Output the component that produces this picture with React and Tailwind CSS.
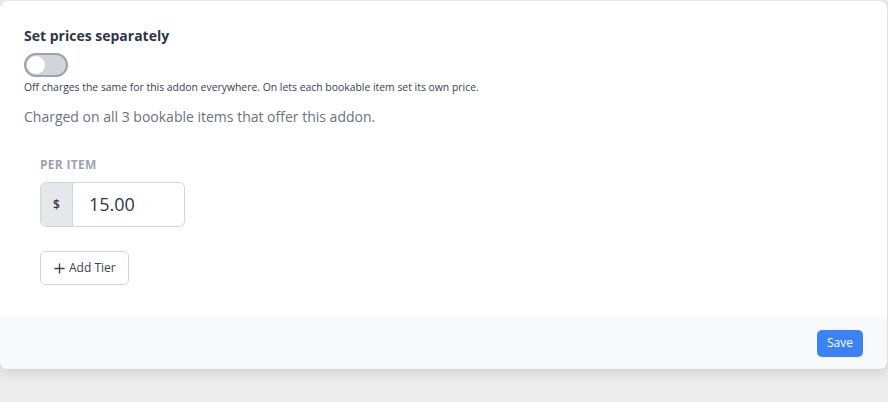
export default function App() {
  return (
    <div className="w-[888px] h-[402px] bg-[#ececec] overflow-hidden" style={{ fontFamily: '"Open Sans", sans-serif' }}>
      <div className="w-[887px] h-[369px] bg-white rounded-lg shadow-[0_4px_12px_rgba(0,0,0,0.12)] border-t border-[#e5e7eb] flex flex-col overflow-hidden">
        <div className="flex-1 px-6 pt-[25px]">
          <div className="text-[14px] font-bold text-[#2d3748] leading-[20px]">Set prices separately</div>
          <div className="mt-[7px] w-[44px] h-[24px] rounded-full bg-[#d1d5db] border-2 border-[#9ca3af] flex items-center p-[1px]">
            <div className="w-[18px] h-[18px] rounded-full bg-white"></div>
          </div>
          <div className="mt-[3px] text-[10.4px] text-[#374151] leading-[14px]">Off charges the same for this addon everywhere. On lets each bookable item set its own price.</div>
          <div className="mt-[13px] text-[14px] text-[#6b7280] leading-[20px]">Charged on all 3 bookable items that offer this addon.</div>
          <div className="pl-4 mt-[30px]">
            <div className="text-[12px] font-bold text-[#9ca3af] tracking-wide leading-[16px]">PER ITEM</div>
            <div className="mt-[9px] w-[145px] h-[45px] flex rounded-md border border-[#d1d5db] overflow-hidden">
              <div className="w-[32px] bg-[#e5e7eb] border-r border-[#d1d5db] flex items-center justify-center text-[12px] text-[#2d3748] font-semibold">$</div>
              <div className="flex-1 flex items-center pl-4 text-[18px] text-[#2d3748]">15.00</div>
            </div>
            <button className="mt-[24px] h-[34px] px-[12px] flex items-center gap-[3px] rounded-[5px] border border-[#d1d5db] bg-white text-[12px] text-[#374151]">
              <svg width="13" height="13" viewBox="0 0 14 14" fill="none" stroke="#374151" strokeWidth="1.5"><path d="M7 1.5v11M1.5 7h11" /></svg>
              Add Tier
            </button>
          </div>
        </div>
        <div className="h-[52px] bg-[#f8f9fb] flex items-center justify-end pr-6">
          <button className="h-[27px] px-[10px] rounded-[5px] bg-[#3b82f6] text-white text-[12px]">Save</button>
        </div>
      </div>
    </div>
  );
}
